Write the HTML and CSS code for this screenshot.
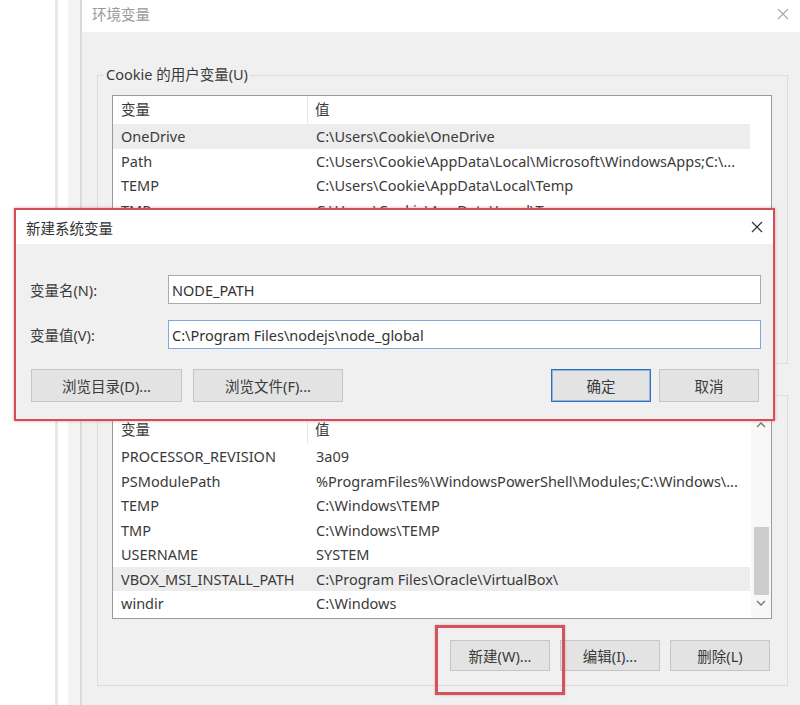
FILE: index.html
```html
<!DOCTYPE html>
<html lang="zh-CN">
<head>
    <meta charset="UTF-8">
    <meta name="viewport" content="width=device-width, initial-scale=1.0">
    <title>环境变量</title>
    <link rel="stylesheet" href="styles.css">
</head>
<body>
    <div class="desktop">
        <div class="strips">
            <div class="strip-a"></div>
            <div class="strip-b"></div>
        </div>

        <div class="env-window">
            <div class="titlebar">
                <span class="title">环境变量</span>
                <svg class="close light" width="12" height="12" viewBox="0 0 12 12">
                    <path d="M1 1 L11 11 M11 1 L1 11" />
                </svg>
            </div>
            <div class="win-body">
                <div class="group">
                    <div class="group-label">Cookie 的用户变量(U)</div>
                    <div class="list user-list">
                        <div class="rows">
                            <div class="row head"><span class="c1">变量</span><span class="c2">值</span></div>
                            <div class="row selected"><span class="c1">OneDrive</span><span class="c2">C:\Users\Cookie\OneDrive</span></div>
                            <div class="row"><span class="c1">Path</span><span class="c2">C:\Users\Cookie\AppData\Local\Microsoft\WindowsApps;C:\...</span></div>
                            <div class="row"><span class="c1">TEMP</span><span class="c2">C:\Users\Cookie\AppData\Local\Temp</span></div>
                            <div class="row"><span class="c1">TMP</span><span class="c2">C:\Users\Cookie\AppData\Local\Temp</span></div>
                        </div>
                    </div>
                    <div class="btn-row">
                        <button class="btn"></button>
                        <button class="btn"></button>
                        <button class="btn"></button>
                    </div>
                </div>

                <div class="group sys-group">
                    <!-- label sits under the dialog -->
                    <div class="group-label empty"></div>
                    <div class="list sys-list">
                        <div class="rows">
                            <div class="row head"><span class="c1">变量</span><span class="c2">值</span></div>
                            <div class="row"><span class="c1">PROCESSOR_REVISION</span><span class="c2">3a09</span></div>
                            <div class="row"><span class="c1">PSModulePath</span><span class="c2">%ProgramFiles%\WindowsPowerShell\Modules;C:\Windows\...</span></div>
                            <div class="row"><span class="c1">TEMP</span><span class="c2">C:\Windows\TEMP</span></div>
                            <div class="row"><span class="c1">TMP</span><span class="c2">C:\Windows\TEMP</span></div>
                            <div class="row"><span class="c1">USERNAME</span><span class="c2">SYSTEM</span></div>
                            <div class="row selected"><span class="c1">VBOX_MSI_INSTALL_PATH</span><span class="c2">C:\Program Files\Oracle\VirtualBox\</span></div>
                            <div class="row"><span class="c1">windir</span><span class="c2">C:\Windows</span></div>
                        </div>
                        <div class="scrollbar">
                            <svg class="arrow" width="20" height="17" viewBox="0 0 20 17">
                                <path d="M6 11 L10 7 L14 11" />
                            </svg>
                            <div class="thumb"></div>
                            <svg class="arrow down" width="20" height="17" viewBox="0 0 20 17">
                                <path d="M6 6 L10 10 L14 6" />
                            </svg>
                        </div>
                    </div>
                    <div class="btn-row">
                        <div class="btn-wrap">
                            <button class="btn">新建(W)...</button>
                            <span class="mark"></span>
                        </div>
                        <button class="btn">编辑(I)...</button>
                        <button class="btn">删除(L)</button>
                    </div>
                </div>
            </div>
        </div>

        <div class="dialog">
            <div class="dlg-title">
                <span>新建系统变量</span>
                <svg class="close" width="12" height="12" viewBox="0 0 12 12">
                    <path d="M1 1 L11 11 M11 1 L1 11" />
                </svg>
            </div>
            <div class="dlg-body">
                <div class="form">
                    <label for="var-name">变量名(N):</label>
                    <input type="text" id="var-name" value="NODE_PATH">
                    <label for="var-value">变量值(V):</label>
                    <input type="text" id="var-value" class="focused" value="C:\Program Files\nodejs\node_global">
                </div>
                <div class="dlg-buttons">
                    <button class="btn wide">浏览目录(D)...</button>
                    <button class="btn wide">浏览文件(F)...</button>
                    <button class="btn default push">确定</button>
                    <button class="btn">取消</button>
                </div>
            </div>
        </div>
    </div>
</body>
</html>
```

FILE: styles.css
```css
body {
    margin: 0;
    background: #fff;
    font-family: "Noto Sans", "Noto Sans CJK SC", sans-serif;
    font-size: 14.5px;
    color: #3a3a3a;
}
.desktop {
    position: relative;
    display: flex;
    width: 800px;
    height: 705px;
    overflow: hidden;
}

/* edges of the windows behind */
.strips {
    display: flex;
    flex-shrink: 0;
}
.strip-a {
    width: 3px;
    margin-left: 55px;
    background: #e8e8e8;
}
.strip-b {
    width: 12px;
    margin-left: 10px;
    background: #f3f3f3;
    border-right: 2px solid #dadada;
}

.env-window {
    flex: 1;
    background: #f0f0f0;
}
.titlebar {
    height: 32px;
    box-sizing: border-box;
    padding: 5px 11px 0 10px;
    background: #fff;
    display: flex;
    justify-content: space-between;
    line-height: 18px;
}
.title {
    color: #9a9a9a;
}
.close path {
    stroke: #333;
    stroke-width: 1.2;
    fill: none;
}
.close.light {
    margin-top: 3px;
}
.close.light path {
    stroke: #aaa;
}

.win-body {
    padding: 43px 12px 0 15px;
}
.group {
    border: 1px solid #dcdcdc;
    padding: 0 15px 14px 14px;
}
.sys-group {
    margin-top: 31px;
}
.group-label {
    width: fit-content;
    margin: -11px 0 0 -8px;
    padding: 0 2px;
    line-height: 18px;
    background: #f0f0f0;
}
.group-label.empty {
    width: 90px;
    height: 18px;
}

.list {
    margin-top: 12px;
    display: flex;
    box-sizing: border-box;
    border: 1px solid #9a9a9a;
    background: #fff;
    overflow: hidden;
}
.user-list {
    height: 211px;
}
.sys-list {
    height: 204px;
}
.rows {
    width: 637px;
}
.row {
    display: flex;
    height: 24.5px;
    line-height: 24.5px;
    white-space: nowrap;
}
.row.head {
    height: 28px;
    line-height: 26px;
}
.row.selected {
    background: #ededed;
}
.c1 {
    width: 195px;
    padding-left: 8px;
    box-sizing: border-box;
    flex-shrink: 0;
}
.head .c1 {
    border-right: 1px solid #e8e8e8;
}
.c2 {
    flex: 1;
    padding-left: 8px;
    overflow: hidden;
}
.head .c2 {
    padding-left: 7px;
}

.scrollbar {
    width: 20px;
    margin-left: 1px;
    display: flex;
    flex-direction: column;
    background: #f8f8f8;
}
.arrow path {
    stroke: #777;
    stroke-width: 1.4;
    fill: none;
}
.arrow.down {
    margin-top: auto;
    margin-bottom: 6px;
}
.thumb {
    height: 68px;
    margin: 94px 2px 0 3px;
    background: #cdcdcd;
}

.btn-row {
    margin-top: 21px;
    padding-right: 2px;
    display: flex;
    justify-content: flex-end;
    gap: 10px;
}
.group:first-child .btn-row {
    margin-top: 12px;
}
.btn {
    width: 100px;
    height: 31px;
    padding: 0;
    border: 1px solid #c6c6c6;
    background: #e3e3e3;
    font-family: inherit;
    font-size: 14.5px;
    color: #3a3a3a;
}
.btn-wrap {
    position: relative;
    display: flex;
}
.mark {
    position: absolute;
    top: -15px;
    left: -15px;
    right: -15px;
    bottom: -24px;
    border: 3px solid #d4525c;
    box-shadow: 0 0 2px rgba(212, 82, 92, 0.5);
}

/* new system variable dialog */
.dialog {
    position: absolute;
    left: 14px;
    top: 208px;
    width: 761px;
    height: 213px;
    box-sizing: border-box;
    border: 2px solid #d24e58;
    box-shadow: 0 0 3px rgba(210, 78, 88, 0.55);
    background: #f0f0f0;
}
.dlg-title {
    height: 34px;
    display: flex;
    justify-content: space-between;
    align-items: center;
    padding: 0 10px;
    background: #fff;
    color: #333;
}
.dlg-body {
    padding: 31px 12px 17px 14px;
}
.form {
    display: grid;
    grid-template-columns: 138px 1fr;
    row-gap: 16px;
    align-items: center;
}
.form input {
    height: 29px;
    box-sizing: border-box;
    border: 1px solid #aaa;
    padding: 0 0 0 3px;
    font-family: inherit;
    font-size: 14.5px;
    color: #333;
    background: #fff;
    outline: none;
}
.form input.focused {
    border-color: #7fa9d8;
}
.dlg-buttons {
    margin-top: 20px;
    padding: 0 2px 0 1px;
    display: flex;
    gap: 8px;
}
.dlg-buttons .btn {
    height: 33px;
}
.btn.wide {
    width: 151px;
}
.btn.wide + .btn.wide {
    margin-left: 3px;
    width: 150px;
}
.btn.default {
    border-color: #2f70b6;
    box-shadow: inset 0 0 0 1px #8db6e2;
}
.push {
    margin-left: auto;
}
```
